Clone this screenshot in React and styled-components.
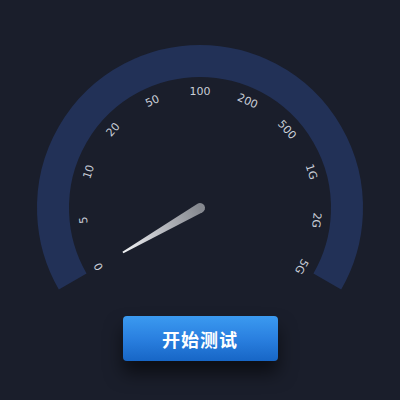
import React from "react";
import styled, { createGlobalStyle } from "styled-components";

const GlobalStyle = createGlobalStyle`
	html, body {
		margin: 0;
		padding: 0;
		background: #1a1e2b;
	}
`;

const Page = styled.div`
	width: 400px;
	height: 400px;
	display: flex;
	flex-direction: column;
	align-items: center;
	background: #1a1e2b;
	overflow: hidden;
`;

const Gauge = styled.svg`
	display: block;
	width: 400px;
	height: 300px;
	flex-shrink: 0;
`;

const TickLabel = styled.text`
	font-family: "DejaVu Sans", "Liberation Sans", sans-serif;
	font-size: 11px;
	fill: #c9ced8;
`;

const StartButton = styled.button`
	margin-top: 16px;
	width: 155px;
	height: 45px;
	border: none;
	border-radius: 4px;
	background: linear-gradient(180deg, #3b9af0 0%, #2a80e0 50%, #1766c6 100%);
	box-shadow: 0 12px 18px rgba(0, 0, 0, 0.55);
	color: #fff;
	font-family: "Noto Sans CJK SC", "Noto Sans", sans-serif;
	font-size: 18px;
	font-weight: 700;
	letter-spacing: 1px;
	cursor: pointer;
`;

const CX = 200;
const CY = 208;
const LABELS = ["0", "5", "10", "20", "50", "100", "200", "500", "1G", "2G", "5G"];

const polar = (r, deg) => {
	const a = (deg * Math.PI) / 180;
	return [CX + r * Math.sin(a), CY - r * Math.cos(a)];
};

const SpeedGauge = () => {
	const [sx, sy] = polar(147, -120);
	const [ex, ey] = polar(147, 120);

	return (
		<Gauge viewBox="0 0 400 300">
			<defs>
				<linearGradient id="needleGrad" gradientUnits="userSpaceOnUse" x1="0" y1="0" x2="-89" y2="0">
					<stop offset="0" stopColor="#85888f" />
					<stop offset="0.6" stopColor="#c4c6cb" />
					<stop offset="1" stopColor="#f2f3f5" />
				</linearGradient>
			</defs>
			<path
				d={`M ${sx} ${sy} A 147 147 0 1 1 ${ex} ${ey}`}
				fill="none"
				stroke="#223157"
				strokeWidth="32"
			/>
			{LABELS.map((label, i) => {
				const deg = -120 + i * 24;
				const [x, y] = polar(117, deg);
				return (
					<TickLabel
						key={label}
						x={x}
						y={y}
						textAnchor="middle"
						dominantBaseline="central"
						transform={`rotate(${deg} ${x} ${y})`}
					>
						{label}
					</TickLabel>
				);
			})}
			{/* needle sits on the "0" mark */}
			<path
				transform={`translate(${CX} ${CY}) rotate(-30)`}
				d="M 0 -5 L -89 -1 L -89 1 L 0 5 A 5 5 0 0 0 0 -5 Z"
				fill="url(#needleGrad)"
			/>
		</Gauge>
	);
};

const App = () => (
	<Page>
		<GlobalStyle />
		<SpeedGauge />
		<StartButton>开始测试</StartButton>
	</Page>
);

export default App;
